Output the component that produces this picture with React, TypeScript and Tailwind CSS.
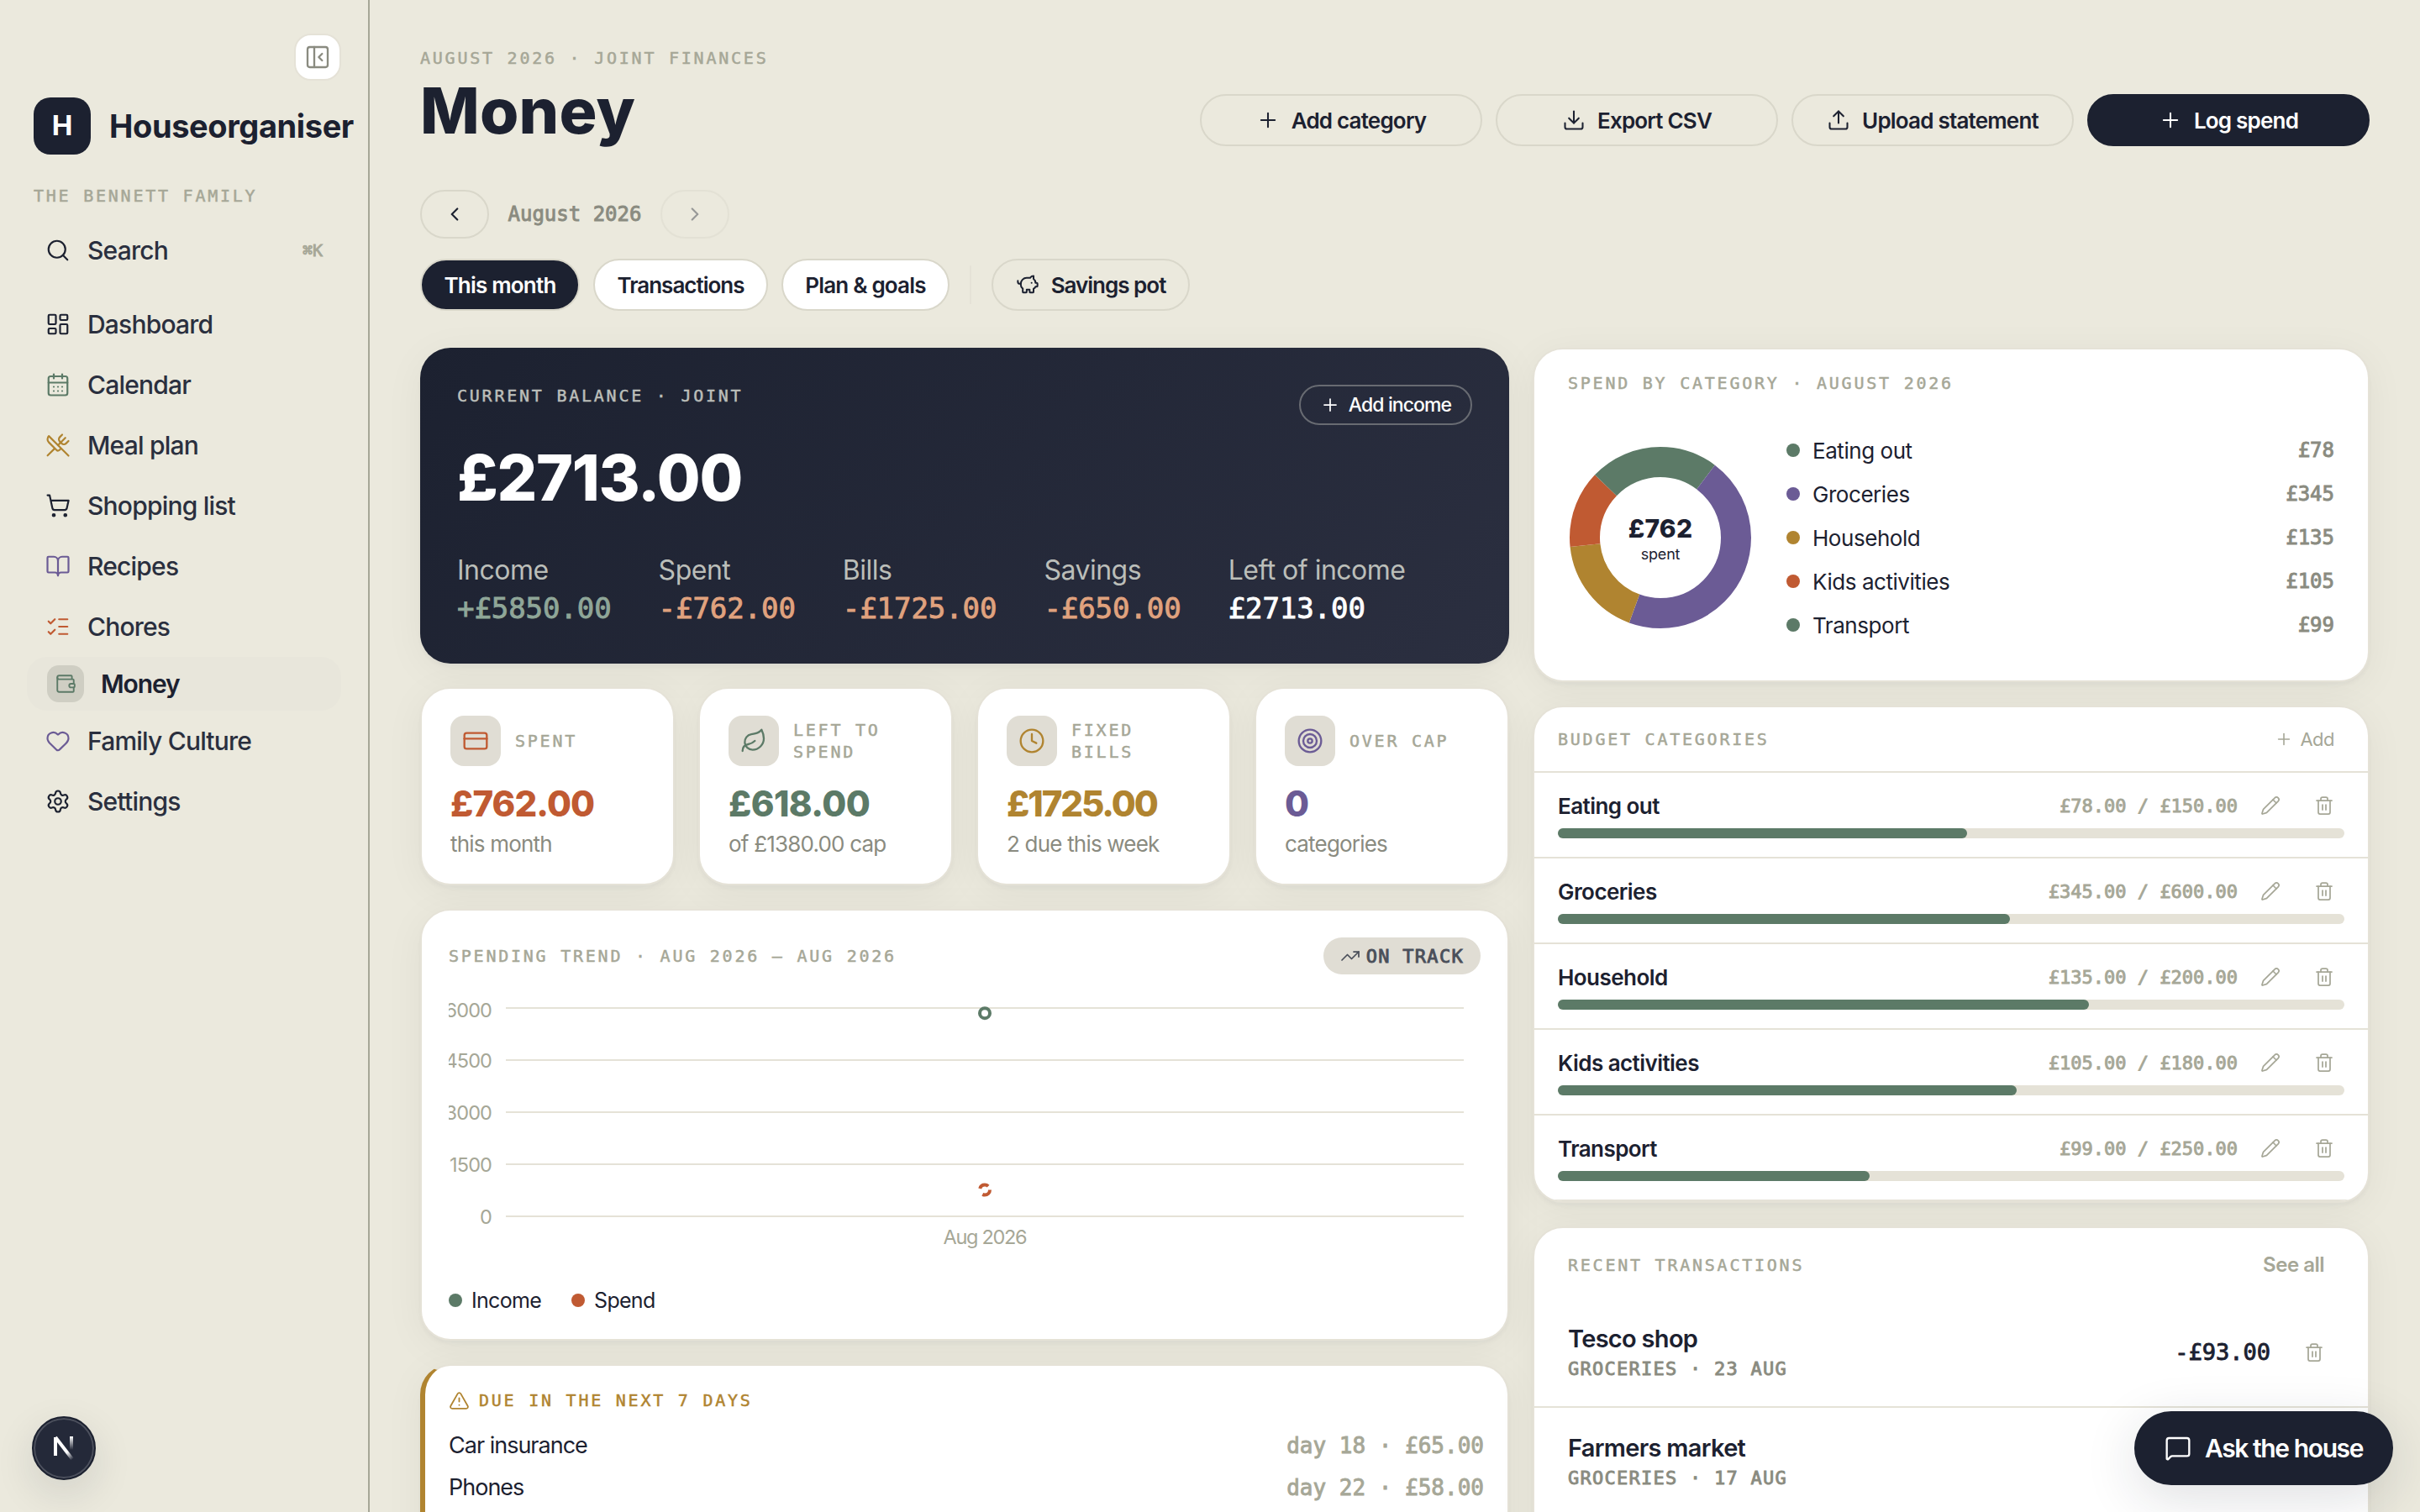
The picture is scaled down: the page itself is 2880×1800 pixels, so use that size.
import type { ReactNode } from 'react';
import clsx from 'clsx';
import {
  BookOpen,
  CalendarDays,
  ChevronLeft,
  ChevronRight,
  Clock,
  CreditCard,
  Download,
  Heart,
  LayoutDashboard,
  Leaf,
  ListChecks,
  MessageSquare,
  PanelLeftClose,
  Pencil,
  PiggyBank,
  Plus,
  Search,
  Settings,
  ShoppingCart,
  Target,
  Trash2,
  TrendingUp,
  TriangleAlert,
  Upload,
  UtensilsCrossed,
  Wallet,
} from 'lucide-react';
import type { LucideIcon } from 'lucide-react';

const NAV: { label: string; icon: LucideIcon; color: string; active?: boolean }[] = [
  { label: 'Dashboard', icon: LayoutDashboard, color: 'text-[#1c2130]' },
  { label: 'Calendar', icon: CalendarDays, color: 'text-[#5c7a67]' },
  { label: 'Meal plan', icon: UtensilsCrossed, color: 'text-[#b08430]' },
  { label: 'Shopping list', icon: ShoppingCart, color: 'text-[#1c2130]' },
  { label: 'Recipes', icon: BookOpen, color: 'text-[#6b5b95]' },
  { label: 'Chores', icon: ListChecks, color: 'text-[#c05a32]' },
  { label: 'Money', icon: Wallet, color: 'text-[#5c7a67]', active: true },
  { label: 'Family Culture', icon: Heart, color: 'text-[#6b5b95]' },
  { label: 'Settings', icon: Settings, color: 'text-[#1c2130]' },
];

const HERO = [
  { label: 'Income', value: '+£5850.00', color: 'text-[#8fa698]' },
  { label: 'Spent', value: '-£762.00', color: 'text-[#e0a27e]' },
  { label: 'Bills', value: '-£1725.00', color: 'text-[#e0a27e]' },
  { label: 'Savings', value: '-£650.00', color: 'text-[#e0a27e]' },
  { label: 'Left of income', value: '£2713.00', color: 'text-white' },
];

const STATS: { label: string; value: string; sub: string; icon: LucideIcon; color: string; tracking: string }[] = [
  { label: 'Spent', value: '£762.00', sub: 'this month', icon: CreditCard, color: 'text-[#c05a32]', tracking: 'tracking-[-0.9px]' },
  { label: 'Left to spend', value: '£618.00', sub: 'of £1380.00 cap', icon: Leaf, color: 'text-[#5c7a67]', tracking: 'tracking-[-0.6px]' },
  { label: 'Fixed bills', value: '£1725.00', sub: '2 due this week', icon: Clock, color: 'text-[#b08430]', tracking: 'tracking-[-2.1px]' },
  { label: 'Over cap', value: '0', sub: 'categories', icon: Target, color: 'text-[#6b5b95]', tracking: 'tracking-[-0.9px]' },
];

const CATEGORIES = [
  { name: 'Eating out', spent: 78, cap: 150, color: '#5c7a67' },
  { name: 'Groceries', spent: 345, cap: 600, color: '#6b5b95' },
  { name: 'Household', spent: 135, cap: 200, color: '#b08430' },
  { name: 'Kids activities', spent: 105, cap: 180, color: '#c05a32' },
  { name: 'Transport', spent: 99, cap: 250, color: '#5c7a67' },
];

const DUE = [
  { name: 'Car insurance', when: 'day 18 · £65.00' },
  { name: 'Phones', when: 'day 22 · £58.00' },
];

const TRANSACTIONS: { name: string; meta: string; amount?: string }[] = [
  { name: 'Tesco shop', meta: 'Groceries · 23 Aug', amount: '-£93.00' },
  { name: 'Farmers market', meta: 'Groceries · 17 Aug' },
];

const money = (n: number) => `£${n.toFixed(2)}`;

function Eyebrow({ children, className = 'text-[#a6a797]' }: { children: ReactNode; className?: string }) {
  return (
    <div
      className={clsx(
        "font-['DejaVu_Sans_Mono',monospace] text-[20px] leading-[26px] tracking-[2.76px] uppercase [-webkit-text-stroke:0.5px]",
        className,
      )}
    >
      {children}
    </div>
  );
}

function Mono({ children, className }: { children: ReactNode; className?: string }) {
  return (
    <span
      className={clsx("font-['DejaVu_Sans_Mono',monospace] whitespace-nowrap [-webkit-text-stroke:0.9px]", className)}
    >
      {children}
    </span>
  );
}

function Card({ children, className }: { children: ReactNode; className?: string }) {
  return (
    <section
      className={clsx(
        'rounded-[36px] border-2 border-[#e5e2d7] bg-white shadow-[0_4px_4px_rgba(28,33,48,0.03),0_8px_48px_rgba(28,33,48,0.05)]',
        className,
      )}
    >
      {children}
    </section>
  );
}

function Sidebar() {
  return (
    <aside className="flex w-[440px] shrink-0 flex-col border-r-2 border-[#a6a797] px-8 pt-10">
      <button className="flex size-14 items-center justify-center self-end rounded-[20px] border-2 border-[#e5e2d7] bg-white text-[#8a8b80]">
        <PanelLeftClose size={32} strokeWidth={1.75} />
      </button>
      <div className="mt-5 flex items-center gap-[22px] pl-2">
        <div className="flex size-[68px] shrink-0 items-center justify-center rounded-[20px] bg-[#1c2130] text-[33px] font-bold text-white">
          H
        </div>
        <span className="text-[38px] leading-[68px] font-bold tracking-[-0.4px]">Houseorganiser</span>
      </div>
      <Eyebrow className="mt-9 pl-2 text-[#a6a797]">The Bennett family</Eyebrow>

      <div className="mt-4 flex h-[72px] items-center pr-[22px] pl-[22px]">
        <Search size={30} strokeWidth={1.75} />
        <span className="ml-5 text-[30px] font-medium tracking-[-0.8px] text-[#2a2f3e]">Search</span>
        <Mono className="ml-auto text-[20px] text-[#a6a797]">⌘K</Mono>
      </div>

      <nav className="mt-4 flex flex-col">
        {NAV.map(({ label, icon: Icon, color, active }) =>
          active ? (
            <div key={label} className="flex h-16 items-center rounded-3xl bg-[#e8e6db] pl-6">
              <div className="flex size-11 items-center justify-center rounded-[14px] bg-[#cfcec3]">
                <Icon size={26} strokeWidth={1.75} className={color} />
              </div>
              <span className="ml-5 text-[30px] font-semibold tracking-[-1.1px]">{label}</span>
            </div>
          ) : (
            <div key={label} className="flex h-[72px] items-center pl-[22px]">
              <Icon size={30} strokeWidth={1.75} className={color} />
              <span className="ml-5 text-[30px] font-medium tracking-[-0.8px] text-[#2a2f3e]">{label}</span>
            </div>
          ),
        )}
      </nav>
    </aside>
  );
}

function HeaderButton({ icon: Icon, label, primary }: { icon: LucideIcon; label: string; primary?: boolean }) {
  return (
    <button
      className={clsx(
        'flex h-[62px] w-[336px] items-center justify-center gap-3.5 rounded-full border-2 text-[26px] font-semibold tracking-[-0.8px]',
        primary ? 'border-[#1c2130] bg-[#1c2130] text-white' : 'border-[#d9d7ca]',
      )}
    >
      <Icon size={28} strokeWidth={1.75} />
      {label}
    </button>
  );
}

function Header() {
  return (
    <>
      <header className="flex h-[118px] items-end justify-between">
        <div className="self-start">
          <Eyebrow>August 2026 · Joint finances</Eyebrow>
          <h1 className="mt-3 text-[75px] leading-[76px] font-extrabold tracking-[0.2px]">Money</h1>
        </div>
        <div className="flex gap-4">
          <HeaderButton icon={Plus} label="Add category" />
          <HeaderButton icon={Download} label="Export CSV" />
          <HeaderButton icon={Upload} label="Upload statement" />
          <HeaderButton icon={Plus} label="Log spend" primary />
        </div>
      </header>

      <div className="mt-[52px] flex items-center">
        <button className="flex h-[58px] w-[82px] items-center justify-center rounded-full border-2 border-[#d9d7ca]">
          <ChevronLeft size={26} strokeWidth={2} />
        </button>
        <Mono className="mx-[22.5px] text-[24px] text-[#8a8b80]">August 2026</Mono>
        <button className="flex h-[58px] w-[82px] items-center justify-center rounded-full border-2 border-[#d9d7ca] opacity-40">
          <ChevronRight size={26} strokeWidth={2} />
        </button>
      </div>

      <div className="mt-6 flex items-center text-[26px] font-semibold tracking-[-0.8px]">
        <button className="h-[62px] w-[190px] rounded-full border-2 border-[#d9d7ca] bg-[#1c2130] text-white">This month</button>
        <button className="ml-4 h-[62px] w-[208px] rounded-full border-2 border-[#d9d7ca] bg-white tracking-[-1px]">
          Transactions
        </button>
        <button className="ml-4 h-[62px] w-[200px] rounded-full border-2 border-[#d9d7ca] bg-white">Plan & goals</button>
        <div className="mx-6 h-[46px] w-0.5 bg-[#e5e2d7]" />
        <button className="flex h-[62px] w-[236px] items-center justify-center gap-3.5 rounded-full border-2 border-[#d9d7ca] tracking-[-1px]">
          <PiggyBank size={28} strokeWidth={1.75} />
          Savings pot
        </button>
      </div>
    </>
  );
}

function BalanceCard() {
  return (
    <section className="h-[376px] rounded-[36px] bg-linear-135 from-[#1c2130] to-[#2b2f40] px-11 pt-11 text-white shadow-[0_4px_4px_rgba(28,33,48,0.03),0_8px_48px_rgba(28,33,48,0.05)]">
      <div className="flex items-start justify-between">
        <Eyebrow className="text-[#bbbeb9]">Current balance · Joint</Eyebrow>
        <button className="flex h-12 w-[206px] items-center justify-center gap-2.5 rounded-full border-2 border-[#686b72] text-[23px] font-medium tracking-[-0.9px]">
          <Plus size={24} strokeWidth={1.75} />
          Add income
        </button>
      </div>
      <div className="mt-[21px] text-[75px] leading-[84px] font-extrabold tracking-[-1.3px]">£2713.00</div>
      <div className="mt-11 flex gap-14">
        {HERO.map((item) => (
          <div key={item.label}>
            <div className="w-0 text-[32px] leading-[48px] tracking-[-0.5px] whitespace-nowrap text-[#bbbeb9]">{item.label}</div>
            <Mono className={clsx('block text-[34px] leading-[42px] tracking-[-0.07px]', item.color)}>{item.value}</Mono>
          </div>
        ))}
      </div>
    </section>
  );
}

function StatCard({ stat }: { stat: (typeof STATS)[number] }) {
  const Icon = stat.icon;
  return (
    <Card className="h-[236px] px-[34px] pt-8">
      <div className="flex items-center gap-[17px]">
        <div className="flex size-[60px] shrink-0 items-center justify-center rounded-2xl bg-[#e0ddd4]">
          <Icon size={32} strokeWidth={1.75} className={stat.color} />
        </div>
        <Eyebrow>{stat.label}</Eyebrow>
      </div>
      <div className={clsx('mt-[23px] text-[42px] leading-[44px] font-extrabold', stat.tracking, stat.color)}>{stat.value}</div>
      <div className="mt-2.5 text-[26px] leading-8 tracking-[-0.8px] text-[#8a8b80]">{stat.sub}</div>
    </Card>
  );
}

function TrendCard() {
  const ticks = [6000, 4500, 3000, 1500, 0];
  const y = (v: number) => 260 - (v / 6000) * 248;
  return (
    <Card className="h-[514px] px-8 pt-8">
      <div className="flex h-11 items-center justify-between">
        <Eyebrow>Spending trend · Aug 2026 – Aug 2026</Eyebrow>
        <div className="flex h-11 items-center gap-[7px] rounded-full bg-[#e0ddd4] pr-5 pl-5 text-[#4a4f5a]">
          <TrendingUp size={24} strokeWidth={1.75} />
          <Mono className="text-[22px] tracking-[1.3px]">ON TRACK</Mono>
        </div>
      </div>
      <svg className="mt-7 block overflow-hidden" width="1228" height="300" viewBox="0 0 1228 300">
        {ticks.map((t, i) => (
          <g key={t}>
            <line x1="68" x2="1208" y1={y(t)} y2={y(t)} stroke="#e5e2d7" strokeWidth="2" />
            <text x="51" y={y(t) + (i === 0 ? 10.5 : 8.5)} textAnchor="end" fontSize="23.5" letterSpacing="-0.9" fill="#a6a797">
              {t}
            </text>
          </g>
        ))}
        <circle cx="638" cy={y(5850)} r="6" fill="#fff" stroke="#5c7a67" strokeWidth="4" />
        <circle cx="638" cy={y(762)} r="6" fill="#fff" stroke="#c05a32" strokeWidth="4" strokeDasharray="12 8" />
        <text x="638" y="292.5" textAnchor="middle" fontSize="23.5" letterSpacing="-1.3" fill="#a6a797">
          Aug 2026
        </text>
      </svg>
      <div className="mt-11 flex items-center gap-9 text-[25px] leading-8 tracking-[-0.7px]">
        <span className="flex items-center gap-[11px]">
          <span className="size-4 rounded-full bg-[#5c7a67]" />
          Income
        </span>
        <span className="flex items-center gap-[11px]">
          <span className="size-4 rounded-full bg-[#c05a32]" />
          Spend
        </span>
      </div>
    </Card>
  );
}

function DueCard() {
  return (
    <Card className="border-l-[6px] border-l-[#b08430] px-7 pt-7 pb-20">
      <div className="flex items-center gap-[11px]">
        <TriangleAlert size={25} strokeWidth={1.75} className="text-[#b08430]" />
        <Eyebrow className="text-[#b08430]">Due in the next 7 days</Eyebrow>
      </div>
      <div className="mt-4">
        {DUE.map((bill) => (
          <div key={bill.name} className="flex h-[50px] items-center justify-between">
            <span className="text-[27px] tracking-[-1px]">{bill.name}</span>
            <Mono className="text-[26px] text-[#a6a797]">{bill.when}</Mono>
          </div>
        ))}
      </div>
    </Card>
  );
}

function Donut() {
  const total = CATEGORIES.reduce((sum, c) => sum + c.spent, 0);
  const circumference = 2 * Math.PI * 90;
  let offset = 0;
  return (
    <div className="relative size-[216px] shrink-0">
      <svg width="216" height="216" viewBox="0 0 216 216" className="-rotate-90">
        {CATEGORIES.map((c) => {
          const length = (c.spent / total) * circumference;
          const start = offset;
          offset += length;
          return (
            <circle
              key={c.name}
              cx="108"
              cy="108"
              r="90"
              fill="none"
              stroke={c.color}
              strokeWidth="36"
              strokeDasharray={`${length} ${circumference - length}`}
              strokeDashoffset={-start}
            />
          );
        })}
      </svg>
      <div className="absolute inset-0 flex flex-col items-center pt-20">
        <span className="text-[30px] leading-[34px] font-extrabold tracking-[0.2px]">£{total}</span>
        <span className="mt-0.5 text-[18px] leading-6 tracking-[-0.2px]">spent</span>
      </div>
    </div>
  );
}

function SpendCard() {
  return (
    <Card className="h-[398px] px-10 pt-[27px]">
      <Eyebrow>Spend by category · August 2026</Eyebrow>
      <div className="mt-[41px] flex items-center gap-[42px] pl-0.5">
        <Donut />
        <ul className="flex-1">
          {CATEGORIES.map((c) => (
            <li key={c.name} className="flex h-[52px] items-center text-[26px] tracking-[-0.45px]">
              <span className="size-4 rounded-full" style={{ backgroundColor: c.color }} />
              <span className="ml-[15px]">{c.name}</span>
              <Mono className="ml-auto text-[24px] tracking-normal text-[#8a8b80]">£{c.spent}</Mono>
            </li>
          ))}
        </ul>
      </div>
    </Card>
  );
}

function BudgetCard() {
  return (
    <Card className="overflow-hidden">
      <div className="flex h-[78px] items-center justify-between border-b-2 border-[#e5e2d7] pr-10 pl-7">
        <Eyebrow>Budget categories</Eyebrow>
        <span className="flex items-center gap-2 text-[22px] tracking-[-0.5px] text-[#a6a797]">
          <Plus size={22} strokeWidth={1.75} />
          Add
        </span>
      </div>
      {CATEGORIES.map((c) => (
        <div key={c.name} className="h-[102px] border-b-2 border-[#e5e2d7] px-7 pt-[22px]">
          <div className="flex h-[34px] items-center">
            <span className="text-[26px] font-semibold tracking-[-0.55px]">{c.name}</span>
            <Mono className="ml-auto text-[22px] text-[#a6a797]">
              {money(c.spent)} / {money(c.cap)}
            </Mono>
            <Pencil size={24} strokeWidth={1.75} className="ml-[27px] text-[#a6a797]" />
            <Trash2 size={24} strokeWidth={1.75} className="mr-3 ml-10 text-[#a6a797]" />
          </div>
          <div className="mt-2.5 h-3 rounded-full bg-[#e5e2d7]">
            <div className="h-full rounded-full bg-[#5c7a67]" style={{ width: `${(c.spent / c.cap) * 100}%` }} />
          </div>
        </div>
      ))}
    </Card>
  );
}

function TransactionsCard() {
  return (
    <Card className="pt-7 pb-20">
      <div className="flex h-8 items-center justify-between pr-[52px] pl-10">
        <Eyebrow>Recent transactions</Eyebrow>
        <span className="text-[24px] font-semibold tracking-[-0.5px] text-[#a6a797]">See all</span>
      </div>
      <div className="mt-6">
        {TRANSACTIONS.map((t) => (
          <div key={t.name} className="flex h-[130px] items-center border-b-2 border-[#e5e2d7] pr-[52px] pl-10">
            <div className="pt-1">
              <div className="text-[29px] leading-9 font-semibold tracking-[-0.7px]">{t.name}</div>
              <Mono className="block text-[22px] leading-9 tracking-[1.26px] text-[#8a8b80] uppercase [-webkit-text-stroke:0.5px]">
                {t.meta}
              </Mono>
            </div>
            {t.amount && (
              <>
                <Mono className="ml-auto text-[27px]">{t.amount}</Mono>
                <Trash2 size={24} strokeWidth={1.75} className="ml-10 text-[#a6a797]" />
              </>
            )}
          </div>
        ))}
      </div>
    </Card>
  );
}

function DevBadge() {
  return (
    <div className="absolute bottom-[38px] left-[38px] flex size-[76px] items-center justify-center rounded-full border-2 border-[#1c2130] bg-[#242939] shadow-[0_16px_48px_rgba(28,33,48,0.12)] ring-2 ring-[#4c505d] ring-inset">
      <svg width="26" height="30" viewBox="0 0 26 30" fill="none">
        <defs>
          <linearGradient id="diag" x1="14" y1="16" x2="24" y2="28" gradientUnits="userSpaceOnUse">
            <stop offset="0.3" stopColor="#fff" />
            <stop offset="1" stopColor="#fff" stopOpacity="0" />
          </linearGradient>
          <linearGradient id="bar" x1="0" y1="1" x2="0" y2="17" gradientUnits="userSpaceOnUse">
            <stop stopColor="#fff" />
            <stop offset="1" stopColor="#fff" stopOpacity="0" />
          </linearGradient>
        </defs>
        <path d="M3 24V2" stroke="#fff" strokeWidth="4" />
        <path d="M3 2l20 26" stroke="url(#diag)" strokeWidth="4" />
        <rect x="20" y="1" width="4" height="16" fill="url(#bar)" />
      </svg>
    </div>
  );
}

export default function App() {
  return (
    <div className="relative flex h-[1800px] w-[2880px] overflow-hidden bg-[#ebe9dd] font-['Inter',sans-serif] text-[#1c2130]">
      <Sidebar />
      <main className="flex-1 px-[60px] pt-14">
        <Header />
        <div className="mt-11 grid grid-cols-[1296px_996px] gap-7">
          <div className="flex flex-col gap-7">
            <BalanceCard />
            <div className="grid grid-cols-4 gap-7">
              {STATS.map((stat) => (
                <StatCard key={stat.label} stat={stat} />
              ))}
            </div>
            <TrendCard />
            <DueCard />
          </div>
          <div className="flex flex-col gap-7">
            <SpendCard />
            <BudgetCard />
            <TransactionsCard />
          </div>
        </div>
      </main>

      <button className="absolute right-8 bottom-8 flex h-[88px] w-[308px] items-center justify-center gap-4 rounded-full bg-[#1c2130] text-[30px] font-semibold tracking-[-1.4px] text-white shadow-[0_16px_64px_rgba(28,33,48,0.14)]">
        <MessageSquare size={32} strokeWidth={1.75} />
        Ask the house
      </button>
      <DevBadge />
    </div>
  );
}
